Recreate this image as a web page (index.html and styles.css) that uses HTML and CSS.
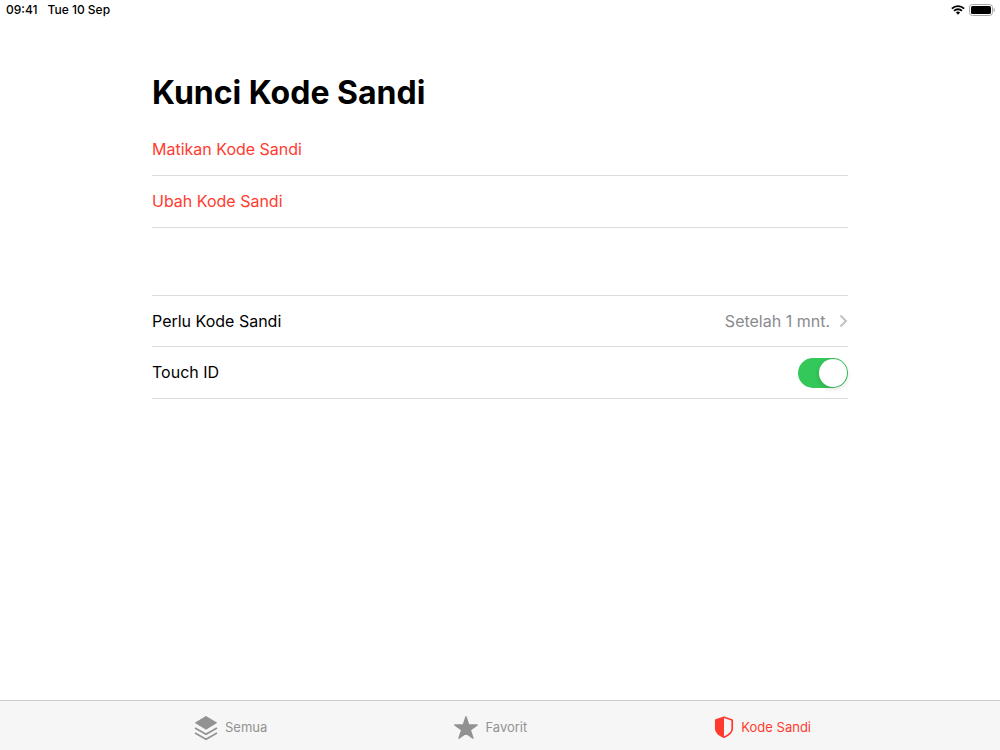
FILE: index.html
```html
<!DOCTYPE html>
<html lang="id">
<head>
<meta charset="utf-8">
<meta name="viewport" content="width=device-width, initial-scale=1">
<title>Kunci Kode Sandi</title>
<link rel="stylesheet" href="styles.css">
</head>
<body>
<header class="status-bar">
  <div class="status-time"><span>09:41</span><span>Tue 10 Sep</span></div>
  <div class="status-icons">
    <svg width="14" height="10" viewBox="0 0 14 10" aria-hidden="true">
      <path d="M.9 3.7a8.6 8.6 0 0 1 12.2 0M3.1 5.9a5.5 5.5 0 0 1 7.8 0" fill="none" stroke="#000" stroke-width="1.9"/>
      <path d="M4.9 7.6a3 3 0 0 1 4.2 0L7 9.8z"/>
    </svg>
    <svg width="26" height="12" viewBox="0 0 26 12" aria-hidden="true">
      <rect x=".5" y=".5" width="23" height="11" rx="3" fill="none" stroke="#a6a6a6"/>
      <rect x="2" y="2" width="20" height="8" rx="1.6"/>
      <path d="M24.6 4v4c.8-.3 1.3-1.1 1.3-2s-.5-1.7-1.3-2z" fill="#a6a6a6"/>
    </svg>
  </div>
</header>
<main class="content">
  <h1 class="title">Kunci Kode Sandi</h1>
  <section class="group">
    <button type="button" class="row row-button row-action">Matikan Kode Sandi</button>
    <button type="button" class="row row-button row-action">Ubah Kode Sandi</button>
  </section>
  <section class="group group-options">
    <button type="button" class="row row-detail">
      <span>Perlu Kode Sandi</span>
      <span class="row-value">Setelah 1 mnt.
        <svg width="9" height="14" viewBox="0 0 9 14" aria-hidden="true"><path d="M1.5 1.5 7 7l-5.5 5.5" fill="none" stroke="#c0c0c3" stroke-width="1.9"/></svg>
      </span>
    </button>
    <div class="row">
      <label class="row-label" for="touch-id">Touch ID</label>
      <input type="checkbox" role="switch" id="touch-id" class="switch" checked>
    </div>
  </section>
</main>
<nav class="tab-bar">
  <div class="tabs">
    <a class="tab" href="#semua">
      <svg width="24" height="26" viewBox="0 0 24 26" aria-hidden="true">
        <path d="M12 1.5 22.500 7.800 12 14.200 1.500 7.800z" fill="#929292" stroke="#929292" stroke-linejoin="round"/>
        <path d="M1 12.900l11 6.300 11-6.300M1 17.900l11 6.300 11-6.300" fill="none" stroke="#929292" stroke-width="1.7"/>
      </svg>
      <span class="tab-label">Semua</span>
    </a>
    <a class="tab" href="#favorit">
      <svg width="24" height="26" viewBox="0 0 24 26" aria-hidden="true">
        <path d="M12 1.800l2.700 8.100h8.500l-6.900 5 2.700 8.300-7-5.100-7 5.100 2.700-8.300-6.900-5h8.500z" fill="#929292" stroke="#929292" stroke-width="1.4" stroke-linejoin="round"/>
      </svg>
      <span class="tab-label">Favorit</span>
    </a>
    <a class="tab tab-active" href="#kode-sandi" aria-current="page">
      <svg width="20" height="26" viewBox="0 0 20 26" aria-hidden="true">
        <path d="M10 2.200 18.200 5v8.900c0 3.400-2.900 5.800-8.200 8.300-5.300-2.500-8.200-4.900-8.200-8.300V5z" fill="none" stroke="#ff3b30" stroke-width="1.7" stroke-linejoin="round"/>
        <path d="M10 2v20.500c-5.200-2.500-8-5.200-8-8.600V5z" fill="#ff3b30"/>
      </svg>
      <span class="tab-label">Kode Sandi</span>
    </a>
  </div>
</nav>
</body>
</html>
```
FILE: styles.css
```css
* {
  box-sizing: border-box;
}

body {
  display: flex;
  flex-direction: column;
  min-height: 100vh;
  margin: 0;
  background: #fff;
  color: #000;
  font-family: Inter, "Liberation Sans", sans-serif;
  font-size: 16px;
}

svg {
  display: block;
  flex: none;
}

.status-bar {
  display: flex;
  align-items: center;
  justify-content: space-between;
  height: 20px;
  padding: 0 5px 0 6px;
  font-size: 12px;
  font-weight: 500;
}

.status-time {
  display: flex;
  gap: 10px;
  padding-bottom: 2px;
}

.status-icons {
  display: flex;
  align-items: center;
  gap: 4px;
}

.content {
  flex: 1;
  width: 100%;
  max-width: 728px;
  margin: 0 auto;
  padding: 53px 16px 0;
}

.title {
  margin: 0 0 11px;
  font-size: 32px;
  font-weight: 700;
  line-height: 40px;
}

.group-options {
  margin-top: 67px;
  border-top: 1px solid #dcdcdd;
}

.row {
  display: flex;
  align-items: center;
  justify-content: space-between;
  width: 100%;
  min-height: 52px;
  padding: 0;
  border: 0;
  border-bottom: 1px solid #dcdcdd;
  background: none;
  color: inherit;
  font: inherit;
  text-align: left;
}

.row-button,
.row-label {
  padding-bottom: 2px;
}

.row-detail {
  min-height: 51px;
}

.row-action {
  color: #ff3b30;
}

.row-value {
  display: flex;
  align-items: center;
  gap: 9px;
  color: #8a8a8e;
}

.switch {
  display: flex;
  align-items: center;
  justify-content: flex-end;
  width: 50px;
  height: 30px;
  margin: 0;
  padding: 1px;
  border-radius: 15px;
  background: #34c759;
  appearance: none;
}

.switch::before {
  content: "";
  width: 28px;
  height: 28px;
  border-radius: 50%;
  background: #fff;
  box-shadow: 0 2px 5px rgba(0, 0, 0, 0.15);
}

.switch:not(:checked) {
  justify-content: flex-start;
  background: #e9e9ea;
}

.tab-bar {
  border-top: 1px solid #cbcbcb;
  background: #f6f6f6;
}

.tabs {
  display: flex;
  align-items: center;
  justify-content: space-between;
  max-width: 622px;
  height: 49px;
  margin: 0 auto;
  padding: 4px 0 0 5px;
}

.tab {
  display: flex;
  align-items: center;
  gap: 7px;
  color: #929292;
  font-size: 13px;
  text-decoration: none;
}

.tab-label {
  padding-bottom: 2px;
}

.tab-active {
  color: #ff3b30;
}
```
